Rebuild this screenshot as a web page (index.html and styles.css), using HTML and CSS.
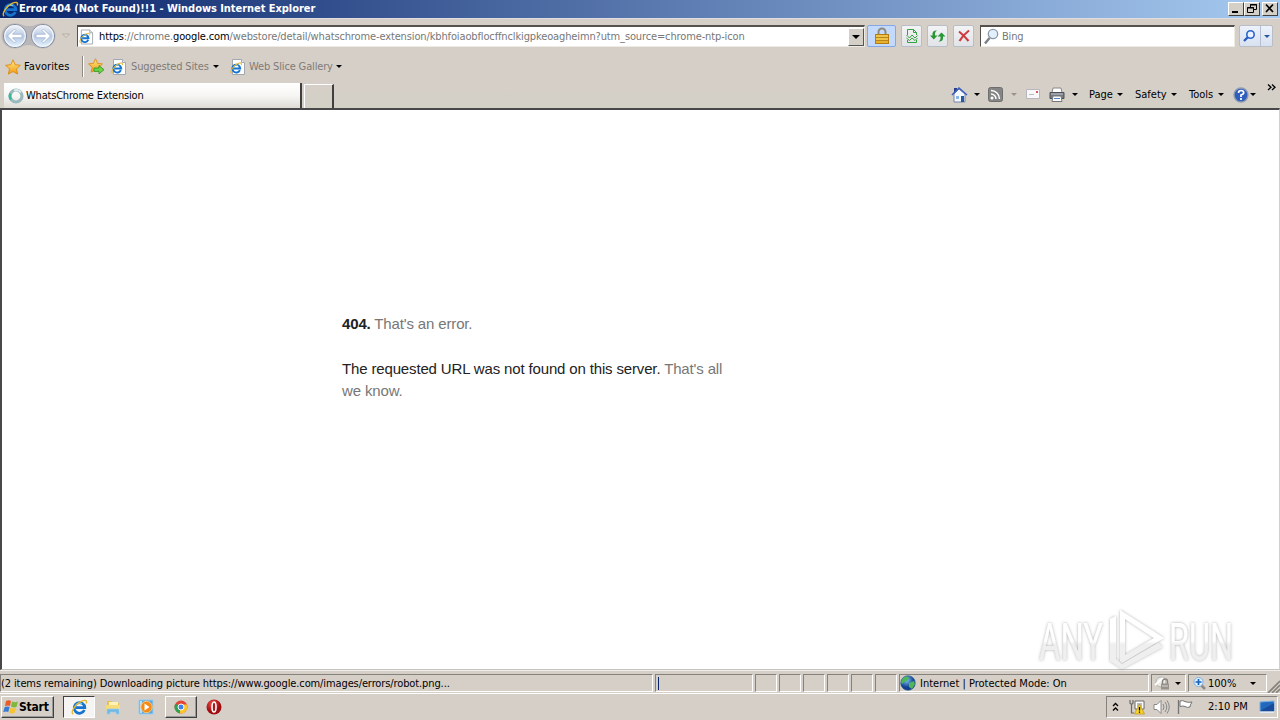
FILE: index.html
```
<!DOCTYPE html>
<html lang="en">
<head>
    <meta charset="UTF-8">
    <meta name="viewport" content="width=device-width, initial-scale=1.0">
    <title>Error 404 (Not Found)!!1</title>
    <link rel="stylesheet" href="styles.css">
</head>
<body>
    <svg class="defs" width="0" height="0">
        <defs>
            <linearGradient id="blueRing" x1="0" y1="0" x2="0" y2="1">
                <stop offset="0" stop-color="#f4f6fa"/><stop offset=".5" stop-color="#b9cae4"/><stop offset="1" stop-color="#e2f3ff"/>
            </linearGradient>
            <linearGradient id="gold" x1="0" y1="0" x2="0" y2="1">
                <stop offset="0" stop-color="#ffe98a"/><stop offset="1" stop-color="#f39a10"/>
            </linearGradient>
            <radialGradient id="redBall" cx=".4" cy=".3">
                <stop offset="0" stop-color="#f0514a"/><stop offset="1" stop-color="#a00d10"/>
            </radialGradient>
            <radialGradient id="globe" cx=".4" cy=".3">
                <stop offset="0" stop-color="#7cc5f2"/><stop offset="1" stop-color="#123f91"/>
            </radialGradient>
            <symbol id="ie" viewBox="0 0 16 16">
                <path d="M12.6 10.4A5 5 0 1 1 13 8.2H4.6" fill="none" stroke="#1673cf" stroke-width="2.6"/>
                <path d="M4.4 6.4a4.6 4.6 0 0 1 6-2" fill="none" stroke="#6cc8f6" stroke-width="1.2"/>
                <path d="M2 14.2C-.8 12.400 4 5 9.500 2.300 13 .600 15.600 1 14.300 4.200" fill="none" stroke="#e6b62c" stroke-width="1.300"/>
            </symbol>
            <symbol id="page" viewBox="0 0 16 16">
                <path d="M2.500.500h9l3 3v12h-12z" fill="#fff" stroke="#a3a8b0"/>
                <path d="M11.500.500v3h3" fill="#e4eaf2" stroke="#a3a8b0"/>
                <use href="#ie" x="0" y="3" width="12.500" height="12.500"/>
            </symbol>
            <symbol id="star" viewBox="0 0 16 16">
                <path d="M8 .8l2.200 4.900 5.200.600-3.900 3.500 1.100 5.300L8 12.500l-4.600 2.600 1.100-5.300L.6 6.300l5.200-.6z" fill="url(#gold)" stroke="#d98a12" stroke-width=".9"/>
            </symbol>
        </defs>
    </svg>

    <div class="titlebar">
        <svg width="17" height="17"><use href="#ie"/></svg>
        <span class="title">Error 404 (Not Found)!!1 - Windows Internet Explorer</span>
        <div class="win-buttons">
            <div class="win-btn"><svg width="14" height="11"><path d="M3 9h6" stroke="#000" stroke-width="2"/></svg></div>
            <div class="win-btn"><svg width="14" height="11"><path d="M5.500 4V1.500h6v5H9M5 2h7M2.500 4.500h6v5h-6zM2 5h7" fill="none" stroke="#000"/></svg></div>
            <div class="win-btn close"><svg width="14" height="11"><path d="M3 1.500l7 7.500M10 1.500L3 9" stroke="#000" stroke-width="1.700"/></svg></div>
        </div>
    </div>

    <div class="navbar">
        <svg class="travel" width="56" height="28">
            <path d="M13 1.500C22 1 22 4 29 4S37 1 43 1.500A12.500 12.500 0 0 1 43 26.500C37 26.500 34 23 29 23S20 26.500 15 26.500A12.500 12.500 0 0 1 13 1.500" fill="#b9b7ba"/>
            <circle cx="15" cy="14" r="11.500" fill="url(#blueRing)" stroke="#7f8998"/>
            <circle cx="43" cy="14" r="11.500" fill="url(#blueRing)" stroke="#7f8998"/>
            <circle cx="15" cy="14" r="10.300" fill="none" stroke="#f0f4f8" stroke-width="1.200"/>
            <circle cx="43" cy="14" r="10.300" fill="none" stroke="#f0f4f8" stroke-width="1.200"/>
            <path d="M7.500 14l7-7 1.500 1.500-3.500 3.700H22v3.600h-9.500l3.500 3.700-1.500 1.500zM50.500 14l-7-7-1.500 1.500 3.500 3.700H36v3.600h9.500L42 19.500l1.500 1.500z" fill="#fff" stroke="#9fb2d0" stroke-width=".8"/>
        </svg>
        <svg width="8" height="6"><path d="M.5 1h7L4 4.500z" fill="#ddd9d4" stroke="#aaa59d" stroke-width=".8"/></svg>
        <div class="address">
            <svg width="15" height="16"><use href="#page"/></svg>
            <span class="url"><b>https</b>://chrome.<b>google.com</b>/webstore/detail/whatschrome-extension/kbhfoiaobflocffnclkigpkeoagheimn?utm_source=chrome-ntp-icon</span>
            <div class="combo"><i class="arrow big"></i></div>
        </div>
        <div class="tool lock">
            <svg width="16" height="18">
                <path d="M4.500 9V5a3.500 3.500 0 0 1 7 0v4" fill="none" stroke="#8f8b7c" stroke-width="2"/>
                <rect x="1.500" y="7.500" width="13" height="9" fill="#e6b22d" stroke="#b57c12"/>
                <path d="M2 10.500h12M2 13.500h12" stroke="#b98518"/><path d="M2 9h12M2 12h12" stroke="#f9d667"/>
            </svg>
        </div>
        <div class="tool">
            <svg width="14" height="16" fill="none" stroke="#37a13d"><path d="M2.500 7V1.500h6l3 3V7M2.500 12v2.500h9V12M8.500 1.500v3h3" fill="none"/><path d="M1.500 7l3 3 2.500-3 3 3 2.500-2.500M1.500 10l3 2.500L7 10l3 2.500 2.500-2.500" stroke-width="1"/></svg>
        </div>
        <div class="tool">
            <svg width="16" height="14" fill="#279735"><path d="M0 6.500h2.500V4.500Q3 1 7 1.500 5 2.500 5 4.500v2h2.500L3.800 10.500z"/><path d="M7.500 7.500l4-4 4 4H13v2Q12.500 13 8.500 12.500q2-1 2-3v-2z"/></svg>
        </div>
        <div class="tool">
            <svg width="14" height="14"><path d="M2 2.500q5 4 9.500 9.500M12 1.500Q6 6 2.500 12" fill="none" stroke="#cf3a40" stroke-width="2.100"/></svg>
        </div>
        <div class="search">
            <svg width="17" height="17"><path d="M6.500 10L2 15.500" stroke="#7d8289" stroke-width="2.500"/><circle cx="10" cy="6" r="4.700" fill="#e2f0fb" stroke="#8c98a8" stroke-width="1.300"/></svg>
            <span>Bing</span>
        </div>
        <div class="tool go">
            <svg width="20" height="18"><path d="M8 10l-4 4" stroke="#245bbf" stroke-width="2.300"/><circle cx="10.500" cy="7.500" r="3.700" fill="#eaf3ff" stroke="#2863cb" stroke-width="1.600"/></svg>
            <span class="go-drop"><i class="arrow blue"></i></span>
        </div>
    </div>

    <div class="favbar">
        <svg width="16" height="16"><use href="#star"/></svg>
        <span class="fav-label">Favorites</span>
        <i class="sep"></i>
        <svg width="17" height="17"><use href="#star" width="15" height="15"/><path d="M6 10h5V7.500l5 4.200-5 4.200v-2.500H6z" fill="#6bd448" stroke="#2d9223" stroke-width=".8"/></svg>
        <svg width="16" height="16"><use href="#page"/></svg>
        <span class="gray">Suggested Sites</span>
        <i class="arrow"></i>
        <svg width="16" height="16"><use href="#page"/></svg>
        <span class="gray">Web Slice Gallery</span>
        <i class="arrow"></i>
    </div>

    <div class="tabrow">
        <div class="tab">
            <svg width="16" height="16"><circle cx="8" cy="8" r="6" fill="none" stroke="#9ab9be" stroke-width="3.200"/><path d="M3 11.500a6 6 0 0 1-.5-6" fill="none" stroke="#35b89a" stroke-width="2.500"/><path d="M6 2.500a6 6 0 0 1 7 2" fill="none" stroke="#dcebed" stroke-width="2"/></svg>
            <span>WhatsChrome Extension</span>
        </div>
        <div class="newtab"></div>
        <div class="commands">
            <svg width="17" height="17"><path d="M3 2h3v4H3z" fill="#2d3f8c"/><path d="M3 8l5-5 6 5v8H3z" fill="#f4f8ff" stroke="#7884a9"/><path d="M1 9l7-7 8 7" fill="none" stroke="#3d61bb" stroke-width="1.600"/><path d="M5 10h3v3H5z" fill="#89b7e8"/><path d="M10 10h3v6h-3z" fill="#23599d"/></svg>
            <i class="arrow"></i>
            <svg width="15" height="15"><rect x=".5" y=".5" width="14" height="14" rx="2" fill="#858585" stroke="#6e6e6e"/><circle cx="4" cy="11" r="1.500" fill="#fff"/><path d="M3 7a5 5 0 0 1 5 5M3 3.500a8.500 8.500 0 0 1 8.500 8.500" fill="none" stroke="#fff" stroke-width="1.500"/></svg>
            <i class="arrow dim"></i>
            <svg width="15" height="11"><path d="M.5.500h13v9H.5z" fill="#f8f8fa" stroke="#b8b5bc"/><path d="M10 2h2v2h-2z" fill="#d95765"/><path d="M3 5.500h5" stroke="#bbb"/></svg>
            <svg width="17" height="16"><path d="M4 1h8l1 5H3z" fill="#fff" stroke="#888"/><path d="M1 5.500h14v6H1z" fill="#767b82" stroke="#4d5157"/><path d="M2 7h12" stroke="#c1c8d0"/><path d="M4 9h8l1 5.500H3z" fill="#fff" stroke="#777"/><path d="M5 11.500h6" stroke="#4b83c9"/></svg>
            <i class="arrow"></i>
            <span>Page</span><i class="arrow"></i>
            <span>Safety</span><i class="arrow"></i>
            <span>Tools</span><i class="arrow"></i>
            <svg width="16" height="16"><circle cx="8" cy="8" r="7" fill="#2f5fba" stroke="#8e9bb4" stroke-width="1.300"/><path d="M5.500 6q0-2.500 2.600-2.500T10.700 6Q10.500 7.300 8 8v2M8 11v2" fill="none" stroke="#fff" stroke-width="1.700"/></svg>
            <i class="arrow"></i>
            <svg class="more" width="9" height="7"><path d="M1 .5l3 2.700L1 6M5 .5l3 2.700L5 6" fill="none" stroke="#000" stroke-width="1.300"/></svg>
        </div>
    </div>

    <div class="content">
        <div class="error">
            <p><b>404.</b> <ins>That's an error.</ins></p>
            <p>The requested URL was not found on this server. <ins>That's all we know.</ins></p>
        </div>
        <svg class="watermark" width="245" height="66">
            <defs>
                <linearGradient id="fade" gradientUnits="userSpaceOnUse" x1="0" y1="6" x2="0" y2="62"><stop offset=".5" stop-color="#fff"/><stop offset=".56" stop-color="#efefef"/></linearGradient>
                <filter id="glow" x="-10%" y="-10%" width="120%" height="125%"><feDropShadow dx="0" dy="0" stdDeviation="1.600" flood-color="#666" flood-opacity=".55"/></filter>
            </defs>
            <g filter="url(#glow)" fill="url(#fade)">
                <text x="9" y="53" textLength="64" lengthAdjust="spacingAndGlyphs">ANY</text>
                <text x="139" y="53" textLength="64" lengthAdjust="spacingAndGlyphs">RUN</text>
                <path d="M90 3l44 28-42 25-2-2zM95 12v36l29-17z" fill-rule="evenodd"/>
                <path d="M80 12l6-3v43l6 5 36-21 5 4-41 22-12-8z"/>
            </g>
        </svg>
    </div>

    <div class="status">
        <div class="cell msg"><span>(2 items remaining) Downloading picture https://www.google.com/images/errors/robot.png...</span></div>
        <div class="cell progress"><i></i></div>
        <div class="cell"></div>
        <div class="cell"></div>
        <div class="cell"></div>
        <div class="cell"></div>
        <div class="cell"></div>
        <div class="cell"></div>
        <div class="cell zone">
            <svg width="16" height="16"><circle cx="8" cy="8" r="7.300" fill="url(#globe)" stroke="#285d87" stroke-width=".6"/><path d="M3 3q4-3 6 0L7 6 4 7 2 9 1 7zM9 8l5-2 1 3-3 5-3-2z" fill="#50b65a"/></svg>
            <span>Internet | Protected Mode: On</span>
        </div>
        <div class="cell privacy">
            <svg width="17" height="16"><circle cx="7" cy="7" r="5" fill="#eceae7" stroke="#b3b0aa"/><path d="M1 10l8-7" stroke="#fff" stroke-width="2"/><path d="M8.500 9V6.500a2.500 2.500 0 0 1 5 0V9" fill="none" stroke="#86837e" stroke-width="1.400"/><path d="M7 8.500h8v6H7z" fill="#96928c"/><path d="M8 11h6" stroke="#d7d4cf"/></svg>
            <i class="arrow"></i>
        </div>
        <div class="cell zoom">
            <svg width="14" height="15"><path d="M8 9l4 4" stroke="#8d8b86" stroke-width="2.500"/><circle cx="5.500" cy="6" r="4.500" fill="#e3f2ff" stroke="#79afe1"/><path d="M5.500 3v6M2.500 6h6" stroke="#1861b8" stroke-width="1.700"/></svg>
            <span>100%</span>
            <i class="arrow"></i>
        </div>
        <svg class="grip" width="13" height="13"><path d="M1 13L13 1M5 13l8-8M9 13l4-4" stroke="#858079" stroke-width="1.600"/></svg>
    </div>

    <div class="taskbar">
        <div class="start">
            <svg width="16" height="16"><path d="M3 2q3-1.500 5 0L7 7Q5 6 2 7z" fill="#e75c28"/><path d="M9 2.500q3 1.500 6 0L13.500 8q-3 1-5.500-.5z" fill="#80b83b"/><path d="M1.700 8q3-1 5 0l-1.500 5q-2-1-5 0z" fill="#367bd4"/><path d="M7.500 8.500q3 1.500 5.500.5l-1.500 5q-3 1-5.500-.5z" fill="#f7c332"/></svg>
            <b>Start</b>
        </div>
        <div class="task pressed"><svg width="17" height="17"><use href="#ie"/></svg></div>
        <svg width="16" height="17"><path d="M2 2h5l1 2h6v7H2z" fill="#e8bf50"/><path d="M4 3h9v5H4z" fill="#fff3b8"/><path d="M1 6h14v6H1z" fill="#f7dc7c"/><path d="M2 15v-5h12v5h-3v-2H5v2z" fill="#73b7e3" stroke="#92d0ef" stroke-width=".7"/></svg>
        <svg width="17" height="17"><path d="M1 1h14v14H1z" fill="#5ba7df" stroke="#97cff3"/><path d="M2 2h2v12H2z" fill="#b9e0fa"/><circle cx="8.500" cy="8" r="5.700" fill="#f58b16" stroke="#fac77c"/><path d="M6.500 4.500l5 3.500-5 3.500z" fill="#fff"/></svg>
        <div class="task"><svg width="14" height="14"><circle cx="7" cy="7" r="6.500" fill="#e34436"/><path d="M7 7L1.300 3.800A6.500 6.500 0 0 0 6 13.400z" fill="#2ba451"/><path d="M7 7h-1v6.400A6.500 6.500 0 0 0 13 4.500H7z" fill="#fbc52d"/><circle cx="7" cy="7" r="3" fill="#3f82ec" stroke="#fff"/></svg></div>
        <svg width="16" height="16"><circle cx="8" cy="8" r="7.500" fill="url(#redBall)"/><ellipse cx="8" cy="8" rx="2" ry="5" fill="#a91b1d" stroke="#fff" stroke-width="1.600"/></svg>
        <div class="tray">
            <svg width="7" height="10"><path d="M1 4l2.500-2.500L6 4M1 8.500L3.500 6 6 8.500" fill="none" stroke="#000" stroke-width="1.300"/></svg>
            <svg width="17" height="16"><path d="M1 1v3q0 1 1.500 1V14H5M4 1v3q0 1-1.500 1" fill="none" stroke="#686868" stroke-width="1.200"/><path d="M6 2h9v8H6z" fill="#fff" stroke="#686868"/><path d="M8 4h5v4H8z" fill="#bbb"/><path d="M10.500 5l5 10h-10z" fill="#f8d42c" stroke="#b89115" stroke-width=".7"/><path d="M10.500 8v3.500M10.500 12.500v1.300" stroke="#000" stroke-width="1.300"/></svg>
            <svg width="18" height="16" fill="none" stroke="#888"><path d="M1 5.500h3l4-4v13l-4-4H1z" fill="#fff"/><path d="M10 5q2 3 0 6M12 3q3.500 5 0 10M14 1.500q4.500 6.500 0 13"/></svg>
            <svg width="17" height="16"><path d="M1.500 1v14" stroke="#747474" stroke-width="1.300"/><path d="M3 2q3-1 5 .5 3 1.500 7 .5-2 3-2 5-3 1-5-.5-2-1-5 0z" fill="#fff" stroke="#747474"/></svg>
            <span>2:10 PM</span>
            <svg width="17" height="14"><path d="M1 2l14-1v10H1z" fill="#2268bd" stroke="#78aee0"/><path d="M1 11l14-8v8z" fill="#1a4b9a"/><path d="M1 12.500h14" stroke="#dce9f6"/></svg>
        </div>
    </div>
</body>
</html>
```
FILE: styles.css
```
* {
    box-sizing: border-box;
}
body {
    margin: 0;
    width: 1280px;
    height: 720px;
    overflow: hidden;
    display: flex;
    flex-direction: column;
    background: #d6cfc8;
    color: #000;
    font: 11px/14px "DejaVu Sans Condensed", "DejaVu Sans", Tahoma, sans-serif;
    letter-spacing: -0.2px;
    white-space: nowrap;
}
svg {
    display: block;
    flex: none;
}
.defs {
    position: absolute;
}
.arrow {
    width: 0;
    height: 0;
    border: 3px solid transparent;
    border-top-color: #000;
    border-bottom: 0;
}
.arrow.big {
    border-width: 4px 4px 0;
}
.arrow.dim {
    border-top-color: #99938c;
}
.arrow.blue {
    border-top-color: #285a9b;
}

/* title bar */
.titlebar {
    height: 18px;
    display: flex;
    align-items: center;
    padding: 0 2px;
    background: linear-gradient(90deg, #0a246a, #a6caf0);
    color: #fff;
}
.title {
    font-weight: bold;
    letter-spacing: -0.05px;
}
.win-buttons {
    display: flex;
    margin-left: auto;
}
.win-btn {
    width: 16px;
    height: 14px;
    background: #d4d0c8;
    border: 1px solid;
    border-color: #fff #404040 #404040 #fff;
}
.win-btn.close {
    margin-left: 2px;
}

/* address row */
.navbar {
    height: 35px;
    display: grid;
    grid-template-columns: 62px 15px 790px 34px 26px 26px 27px 259px 40px;
    align-items: center;
    border-top: 1px solid #dfdde2;
}
.travel {
    margin-top: -1px;
}
.address, .search {
    height: 22px;
    display: flex;
    align-items: center;
    background: #fff;
    border: 1px solid;
    border-color: #55524e #eeebe5 #eeebe5 #55524e;
    border-top-width: 2px;
}
.address {
    width: 788px;
    padding-left: 1px;
}
.url {
    margin-left: 5px;
    color: #777;
    letter-spacing: -0.13px;
}
.url b {
    color: #000;
    font-weight: normal;
}
.combo {
    width: 16px;
    height: 18px;
    margin-left: auto;
    display: flex;
    align-items: center;
    justify-content: center;
    background: #d4d0c8;
    border: 1px solid;
    border-color: #fff #555 #555 #fff;
}
.tool {
    width: 21px;
    height: 22px;
    display: flex;
    align-items: center;
    justify-content: center;
    background: linear-gradient(#f2f3f5, #e1e4e8);
    border: 1px solid #b9bdc5;
    border-radius: 2px;
}
.tool.lock {
    width: 29px;
    background: #c4dafc;
    border-color: #83a8e5;
}
.search {
    width: 255px;
    padding-left: 2px;
    color: #777;
}
.search span {
    margin-left: 2px;
}
.tool.go {
    width: 34px;
    justify-content: flex-start;
    background: linear-gradient(#edf2fb, #d8e1f0);
}
.go-drop {
    width: 13px;
    height: 20px;
    display: flex;
    align-items: center;
    justify-content: center;
    border-left: 1px solid #b4bfd1;
}

/* favorites */
.favbar {
    height: 27px;
    display: grid;
    grid-template-columns: 19px 58px 6px 23px 20px 82px 17px 19px 87px 10px;
    padding-left: 5px;
    align-items: center;
}
.fav-label {
    letter-spacing: 0.1px;
}
.gray {
    color: #807b76;
    letter-spacing: -0.15px;
}
.sep {
    width: 2px;
    height: 21px;
    border-left: 1px solid #8d8983;
    border-right: 1px solid #fff;
}

/* tabs + command bar */
.tabrow {
    height: 28px;
    padding: 3px 0 0 4px;
    display: flex;
    background: linear-gradient(#d6cfc8, #d3d0c6);
}
.tab {
    width: 298px;
    display: flex;
    align-items: center;
    padding: 1px 0 0 4px;
    background: linear-gradient(#fff, #f7f6f4 50%, #dedbd6);
    border-right: 2px solid #3f3f3f;
}
.tab span {
    margin-left: 2px;
}
.newtab {
    width: 30px;
    margin: 1px 1px 0 2px;
    border: 1px solid #fff;
    border-right: 2px solid #3f3f3f;
    border-bottom: 0;
}
.commands {
    margin-left: 616px;
    height: 23px;
    display: grid;
    grid-template-columns: 23px 14px 23px 15px 23px 23px 17px 28px 18px 36px 18px 29px 15px 17px 17px 10px;
    align-items: center;
    letter-spacing: 0;
}
.more {
    align-self: start;
    margin-top: 1px;
}

/* page */
.content {
    height: 562px;
    position: relative;
    background: #fff;
    border: solid;
    border-width: 2px 1px 1px 2px;
    border-color: #48484a #d4d0c8 #c5c2bc #48484a;
    white-space: normal;
}
.error {
    width: 390px;
    margin: 203px 0 0 340px;
    font: 15px/22px "Liberation Sans", Arial, sans-serif;
    letter-spacing: -0.15px;
    color: #222;
}
.error p {
    margin: 0 0 23px;
}
.error ins {
    color: #777;
    text-decoration: none;
}
.watermark {
    position: absolute;
    left: 1028px;
    top: 497px;
    font: 51px/1 Roboto, sans-serif;
    letter-spacing: 0;
}

/* status bar */
.status {
    height: 24px;
    padding-top: 3px;
    display: grid;
    grid-template-columns: 655px 100px 24px 24px 24px 24px 24px 24px 252px 37px 79px 13px;
    align-items: start;
    border-top: 1px solid #eee;
    border-bottom: 1px solid #fff;
}
.cell {
    height: 18px;
    margin-right: 2px;
    display: flex;
    align-items: center;
    border: 1px solid;
    border-color: #85817b #fff #fff #85817b;
}
.cell span {
    padding-top: 1px;
}
.msg {
    letter-spacing: -0.11px;
}
.cell.progress i {
    width: 1px;
    height: 13px;
    margin-left: 2px;
    background: #0a246a;
}
.zone span {
    margin-left: 4px;
    letter-spacing: 0;
}
.privacy {
    padding-left: 2px;
    gap: 4px;
}
.zoom {
    padding-left: 4px;
    margin-right: 0;
}
.zoom span {
    margin-left: 1px;
    letter-spacing: 0;
}
.zoom .arrow {
    margin-left: 14px;
}
.grip {
    align-self: end;
}

/* taskbar */
.taskbar {
    height: 26px;
    padding-left: 1px;
    display: grid;
    grid-template-columns: 62px 42px 33px 27px 41px 900px 172px;
    align-items: center;
}
.start, .task {
    height: 22px;
    display: flex;
    align-items: center;
    border: 1px solid;
    border-color: #fff #404040 #404040 #fff;
    box-shadow: inset -1px -1px #999;
}
.start {
    width: 53px;
    padding-left: 1px;
    font-size: 12px;
}
.task {
    width: 32px;
    justify-content: center;
}
.task.pressed {
    background: #f5f4f2;
    border-color: #404040 #fff #fff #404040;
    box-shadow: none;
}
.tray {
    height: 22px;
    padding-left: 5px;
    display: grid;
    grid-template-columns: 17px 24px 24px 31px 51px 17px;
    align-items: center;
    border: 1px solid;
    border-color: #85817b #fff #fff #85817b;
    letter-spacing: 0;
}
```
